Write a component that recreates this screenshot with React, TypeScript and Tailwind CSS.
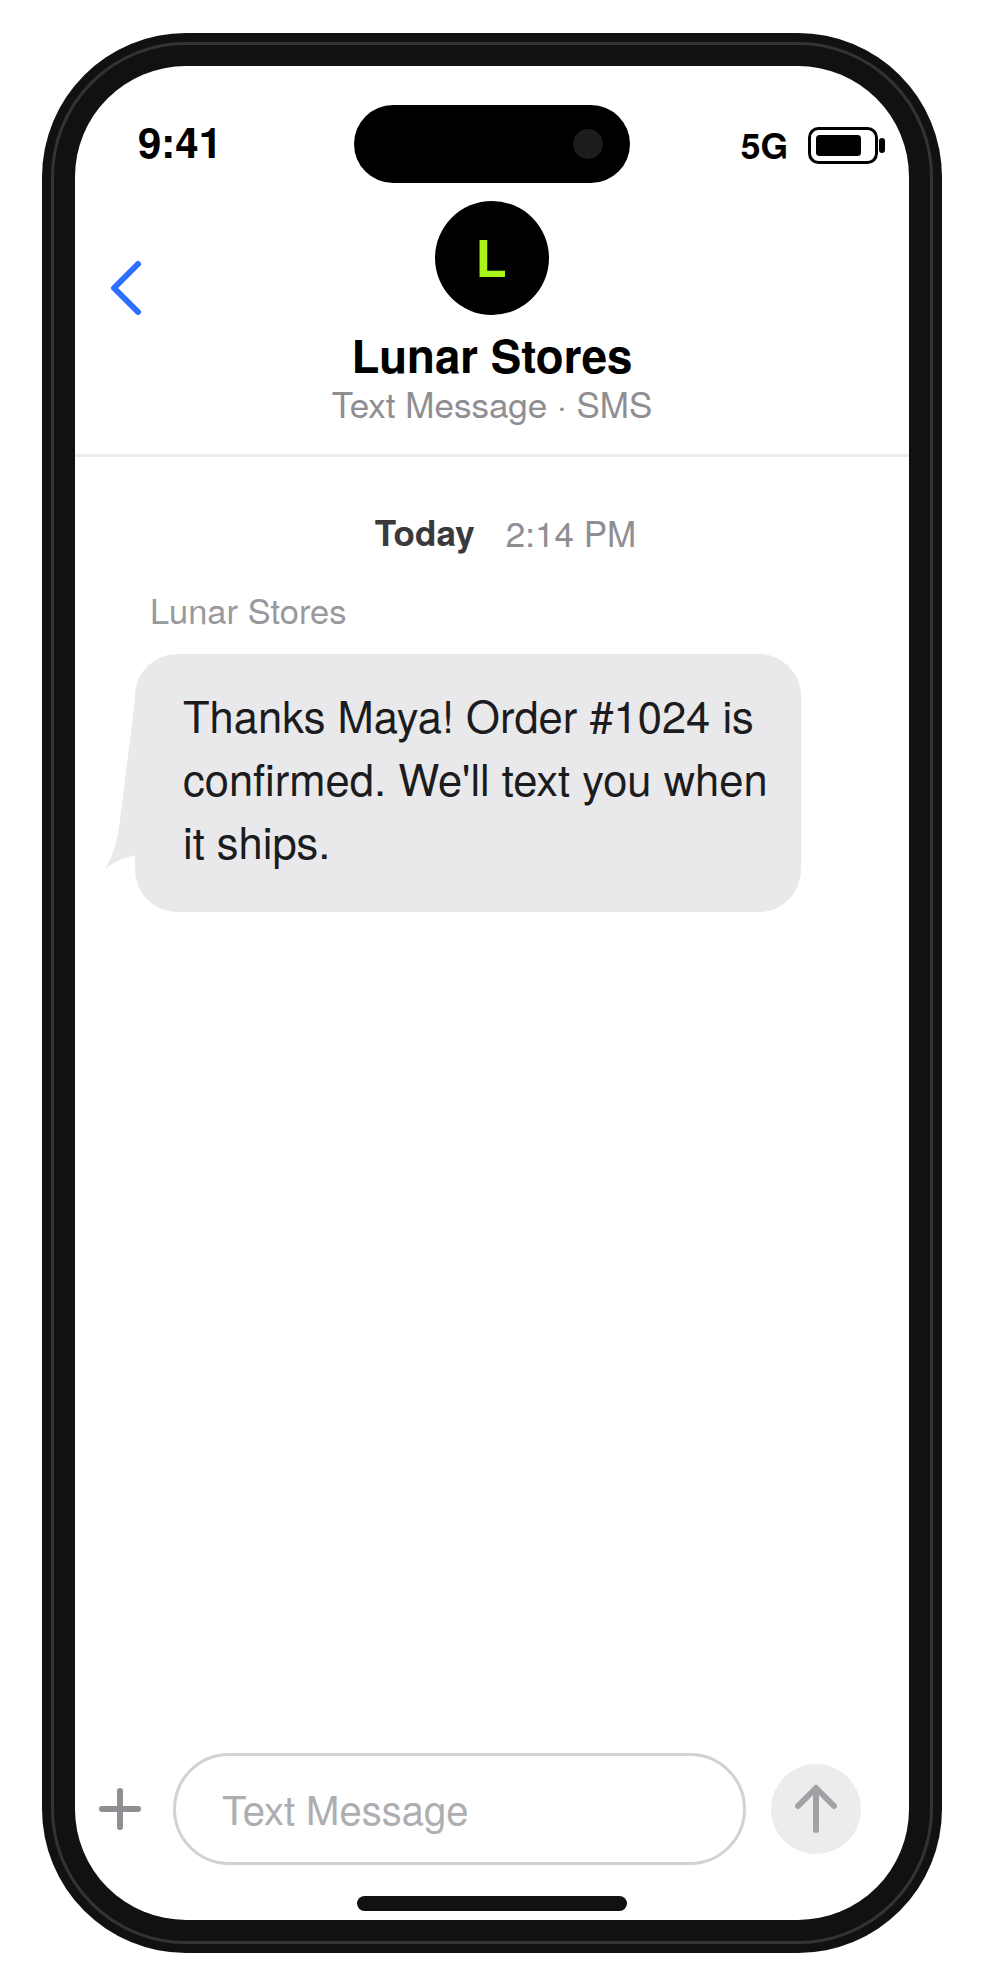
import React from 'react';

const StatusBar: React.FC = () => (
  <div className="mt-[39px] flex h-[78px] shrink-0 items-center">
    <div className="w-[279px] pb-[5px] pl-[63px] text-[42px] leading-[73px] font-bold text-black">9:41</div>
    <div className="flex h-[78px] w-[276px] items-center justify-end rounded-full bg-black pr-[27px]">
      <div className="h-[30px] w-[30px] rounded-full bg-[#1c1c1e]" />
    </div>
    <div className="flex w-[279px] items-center justify-end pr-[24px]">
      <span className="mt-[2px] mr-[20px] text-[35.5px] leading-[78px] font-bold text-black">5G</span>
      <svg className="mt-[3px]" width="77" height="37" viewBox="0 0 77 37" fill="none">
        <rect x="1.5" y="1.5" width="67" height="34" rx="9" stroke="#000" strokeWidth="3" />
        <rect x="8" y="8" width="45" height="21" rx="3.5" fill="#000" />
        <rect x="71" y="11" width="6" height="15" rx="3" fill="#000" />
      </svg>
    </div>
  </div>
);

const Header: React.FC = () => (
  <header className="relative flex shrink-0 flex-col items-center border-b-[3px] border-[#ececee] pt-[18px] pb-[30.5px]">
    <button className="absolute top-[75px] left-[33px]">
      <svg width="36" height="60" viewBox="0 0 36 60" fill="none">
        <path d="M30 6 L6 30 L30 54" stroke="#2f6fff" strokeWidth="6" strokeLinecap="round" strokeLinejoin="round" />
      </svg>
    </button>
    <div className="flex h-[114px] w-[114px] items-center justify-center rounded-full bg-black pr-[2px] pb-[2px] text-[51px] leading-[60px] font-bold text-[#aaf519]">
      L
    </div>
    <h1 className="mt-[12.5px] text-[45.6px] leading-[54px] font-bold text-black">Lunar Stores</h1>
    <p className="text-[35px] leading-[42px] text-[#8e8e93]">Text Message · SMS</p>
  </header>
);

const Bubble: React.FC = () => (
  <div className="relative w-[666px] rounded-[42px] bg-[#e9e9eb] pt-[28.5px] pr-[33px] pb-[40.5px] pl-[48px] text-[43.5px] leading-[63px] text-[#1c1c1e]">
    <svg className="absolute top-0 left-[-30px]" width="32" height="220" viewBox="0 0 32 220" fill="none">
      <path d="M32 40 L30 46 L15 166 Q12 196 0 215 Q13 204 32 201 Z" fill="#e9e9eb" />
    </svg>
    Thanks Maya! Order #1024 is confirmed. We'll text you when it ships.
  </div>
);

const Composer: React.FC = () => (
  <div className="mt-auto flex items-center pl-[21px]">
    <svg width="48" height="48" viewBox="0 0 48 48" fill="none">
      <path d="M24 6 V42 M6 24 H42" stroke="#8e8e93" strokeWidth="6" strokeLinecap="round" />
    </svg>
    <div className="ml-[29px] flex h-[112px] w-[573px] items-center rounded-full border-[3px] border-[#d1d1d6] pb-[2px] pl-[46px] text-[40px] leading-[48px] text-[#aeaeb2]">
      Text Message
    </div>
    <div className="ml-[25px] flex h-[90px] w-[90px] items-center justify-center rounded-full bg-[#ececec]">
      <svg width="54" height="54" viewBox="0 0 54 54" fill="none">
        <path d="M27 6 V48 M9 24 L27 6 L45 24" stroke="#a1a1a6" strokeWidth="6" strokeLinecap="round" strokeLinejoin="round" />
      </svg>
    </div>
  </div>
);

const App: React.FC = () => {
  return (
    <div className="flex h-[1986px] w-[984px] items-center justify-center bg-white [font-family:'TeX_Gyre_Heros','Liberation_Sans',Arial,sans-serif]">
      <div className="relative h-[1920px] w-[900px] rounded-[144px] bg-[#111113] p-[33px]">
        <div className="absolute inset-[9px] rounded-[135px] border-[3px] border-[#333335]" />
        <div className="relative flex h-full w-full flex-col overflow-hidden rounded-[111px] bg-white">
          <StatusBar />
          <Header />
          <main className="pt-[54px] pr-[33px] pl-[60px]">
            <div className="flex justify-center text-[35px] leading-[42px]">
              <span className="font-bold text-[#3a3a3c]">Today</span>
              <span className="ml-[31px] text-[#8e8e93]">2:14 PM</span>
            </div>
            <div className="mt-[35px] mb-[24px] pl-[15px] text-[34.5px] leading-[42px] text-[#98989d]">Lunar Stores</div>
            <Bubble />
          </main>
          <Composer />
          <div className="mt-[31px] mb-[9px] h-[15px] w-[270px] shrink-0 self-center rounded-full bg-[#111113]" />
        </div>
      </div>
    </div>
  );
};

export default App;
